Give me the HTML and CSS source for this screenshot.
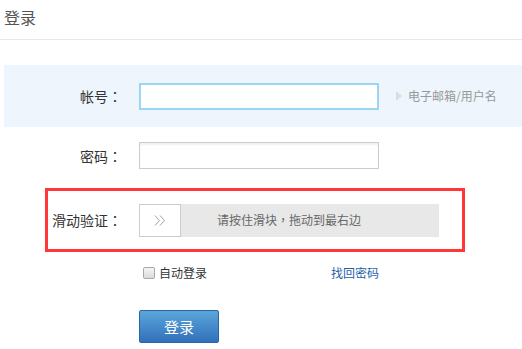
FILE: index.html
```html
<!DOCTYPE html>
<html lang="zh-CN">
<head>
<meta charset="utf-8">
<title>登录</title>
<link rel="stylesheet" href="styles.css">
</head>
<body>
<div class="header">登录</div>
<div class="form">
  <div class="row row-account">
    <label class="label">帐号<span class="punct" lang="zh-TW">：</span></label>
    <div class="input input-focus"></div>
    <div class="hint"><span class="tri"></span><span class="hint-text">电子邮箱/用户名</span></div>
  </div>
  <div class="row row-pass">
    <label class="label">密码<span class="punct" lang="zh-TW">：</span></label>
    <div class="input input-pass"></div>
  </div>
  <div class="row row-verify">
    <label class="label label-verify">滑动验证<span class="punct" lang="zh-TW">：</span></label>
    <div class="slider">
      <div class="handle">
        <svg width="12" height="11" viewBox="0 0 12 11"><path d="M1 0.5 L5.5 5.5 L1 10.5 M6 0.5 L10.5 5.5 L6 10.5" fill="none" stroke="#a0a0a0" stroke-width="1"/></svg>
      </div>
      <span class="slider-text">请按住滑块<span class="punct" lang="zh-TW">，</span>拖动到最右边</span>
    </div>
  </div>
  <div class="opts">
    <span class="auto"><span class="check"></span>自动登录</span>
    <a class="forgot">找回密码</a>
  </div>
  <div class="btn-row">
    <button class="btn">登录</button>
  </div>
</div>
</body>
</html>
```
FILE: styles.css
```css
* { box-sizing: border-box; }
html, body { margin: 0; padding: 0; background: #fff; }
body {
  font-family: "Noto Sans CJK SC", "Noto Sans", sans-serif;
  color: #333;
  width: 522px;
  height: 349px;
  overflow: hidden;
}
.punct { font-family: "Noto Sans CJK TC", sans-serif; }
.header {
  height: 40px;
  border-bottom: 1px solid #e8e8e8;
  padding-left: 4px;
  padding-top: 6px;
  font-size: 16px;
  line-height: 22px;
  color: #555;
}
.form { padding-top: 25px; }
.row { display: flex; align-items: center; }
.label {
  width: 118px;
  flex: none;
  text-align: right;
  font-size: 14px;
  line-height: 20px;
  color: #333;
  margin-right: 17px;
}
.row-account {
  margin-left: 4px;
  height: 62px;
  background: #eef5fc;
}
.input {
  width: 240px;
  height: 27px;
  background: #fff;
  flex: none;
}
.input-focus { border: 2px solid #9bd5f4; }
.input-pass {
  border: 1px solid #cccccc;
  box-shadow: inset 0 2px 2px rgba(0,0,0,0.06);
}
.hint { display: flex; align-items: center; margin-left: 17px; }
.tri {
  width: 0; height: 0;
  border-top: 5px solid transparent;
  border-bottom: 5px solid transparent;
  border-left: 6px solid #dddddd;
  margin-right: 6px;
}
.hint-text { font-size: 12px; color: #999; line-height: 16px; }
.row-pass { margin-left: 4px; margin-top: 15px; height: 27px; }
.row-verify {
  margin-left: 45px;
  margin-top: 19px;
  width: 420px;
  height: 64px;
  border: 3px solid #ff3737;
}
.label-verify { width: 74px; }
.slider {
  position: relative;
  width: 300px;
  height: 33px;
  background: #e8e8e8;
  display: flex;
  align-items: center;
  justify-content: center;
}
.handle {
  position: absolute;
  left: 0; top: 0;
  width: 42px; height: 33px;
  background: #fff;
  border: 1px solid #cccccc;
  display: flex; align-items: center; justify-content: center;
}
.slider-text { font-size: 12px; color: #666; line-height: 16px; }
.opts {
  margin-top: 12px;
  margin-left: 139px;
  width: 240px;
  height: 18px;
  display: flex;
  align-items: center;
  justify-content: space-between;
  font-size: 12px;
  line-height: 16px;
}
.auto { display: flex; align-items: center; color: #333; margin-left: 4px; }
.check {
  width: 12px; height: 12px;
  border: 1px solid #a8a8a8;
  border-radius: 2px;
  background: linear-gradient(#f4f4f4, #dcdcdc);
  margin-right: 4px;
}
.forgot { color: #1f5fa6; cursor: pointer; }
.btn-row { margin-top: 28px; margin-left: 139px; }
.btn {
  width: 80px; height: 33px;
  border: 1px solid #2a68a4;
  border-radius: 2px;
  background: linear-gradient(#5aa6da, #3270bb);
  color: #fff;
  font-family: "Noto Sans CJK SC", sans-serif;
  font-size: 15px;
  padding: 0;
}
```
